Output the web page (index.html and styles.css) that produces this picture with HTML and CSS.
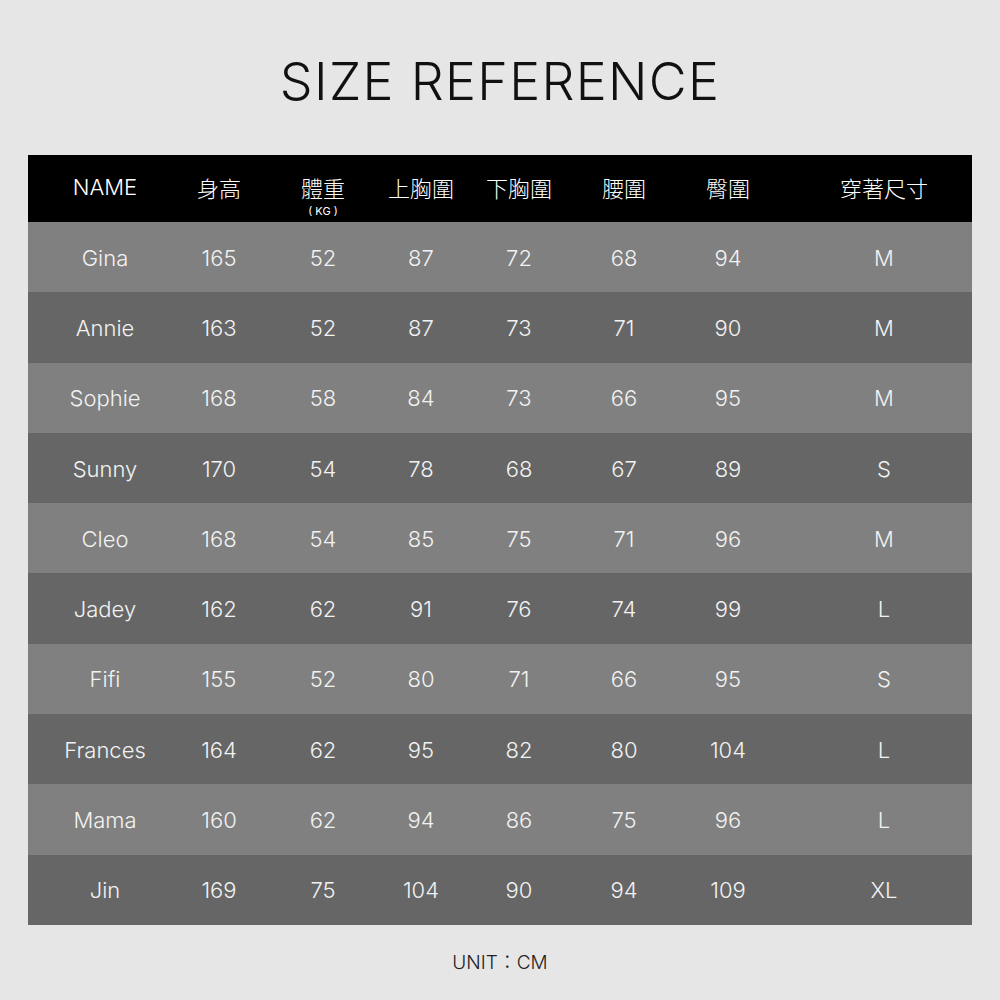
FILE: index.html
```html
<!DOCTYPE html>
<html lang="zh-Hant">
<head>
<meta charset="utf-8">
<title>Size Reference</title>
<link rel="stylesheet" href="styles.css">
</head>
<body>
<div class="page">
  <h1 class="title">SIZE REFERENCE</h1>
  <div class="table">
    <div class="row head">
      <div class="cell">NAME</div>
      <div class="cell">身高</div>
      <div class="cell">體重<span class="sub">( KG )</span></div>
      <div class="cell">上胸圍</div>
      <div class="cell">下胸圍</div>
      <div class="cell">腰圍</div>
      <div class="cell">臀圍</div>
      <div class="cell">穿著尺寸</div>
    </div>
    <div class="row light"><div class="cell">Gina</div><div class="cell">165</div><div class="cell">52</div><div class="cell">87</div><div class="cell">72</div><div class="cell">68</div><div class="cell">94</div><div class="cell">M</div></div>
    <div class="row dark"><div class="cell">Annie</div><div class="cell">163</div><div class="cell">52</div><div class="cell">87</div><div class="cell">73</div><div class="cell">71</div><div class="cell">90</div><div class="cell">M</div></div>
    <div class="row light"><div class="cell">Sophie</div><div class="cell">168</div><div class="cell">58</div><div class="cell">84</div><div class="cell">73</div><div class="cell">66</div><div class="cell">95</div><div class="cell">M</div></div>
    <div class="row dark"><div class="cell">Sunny</div><div class="cell">170</div><div class="cell">54</div><div class="cell">78</div><div class="cell">68</div><div class="cell">67</div><div class="cell">89</div><div class="cell">S</div></div>
    <div class="row light"><div class="cell">Cleo</div><div class="cell">168</div><div class="cell">54</div><div class="cell">85</div><div class="cell">75</div><div class="cell">71</div><div class="cell">96</div><div class="cell">M</div></div>
    <div class="row dark"><div class="cell">Jadey</div><div class="cell">162</div><div class="cell">62</div><div class="cell">91</div><div class="cell">76</div><div class="cell">74</div><div class="cell">99</div><div class="cell">L</div></div>
    <div class="row light"><div class="cell">Fifi</div><div class="cell">155</div><div class="cell">52</div><div class="cell">80</div><div class="cell">71</div><div class="cell">66</div><div class="cell">95</div><div class="cell">S</div></div>
    <div class="row dark"><div class="cell">Frances</div><div class="cell">164</div><div class="cell">62</div><div class="cell">95</div><div class="cell">82</div><div class="cell">80</div><div class="cell">104</div><div class="cell">L</div></div>
    <div class="row light"><div class="cell">Mama</div><div class="cell">160</div><div class="cell">62</div><div class="cell">94</div><div class="cell">86</div><div class="cell">75</div><div class="cell">96</div><div class="cell">L</div></div>
    <div class="row dark"><div class="cell">Jin</div><div class="cell">169</div><div class="cell">75</div><div class="cell">104</div><div class="cell">90</div><div class="cell">94</div><div class="cell">109</div><div class="cell">XL</div></div>
  </div>
  <p class="unit">UNIT：CM</p>
</div>
</body>
</html>
```
FILE: styles.css
```css
html, body {
  margin: 0;
  padding: 0;
  background: #e6e6e6;
}
body {
  font-family: "Inter", "Liberation Sans", "Noto Sans CJK TC", sans-serif;
  font-weight: 300;
}
.page {
  width: 1000px;
  height: 1000px;
  overflow: hidden;
}
.title {
  margin: 0;
  padding-top: 52px;
  height: 60px;
  line-height: 60px;
  margin-bottom: 43px;
  text-align: center;
  font-size: 52px;
  font-weight: 300;
  color: #111;
  letter-spacing: 1.3px;
}
.table {
  margin: 0 28px;
  width: 944px;
}
.row {
  display: grid;
  grid-template-columns: 154px 74px 134px 62px 134px 76px 132px 180px;
  height: 70.3px;
}
.row.head {
  height: 67px;
  background: #000;
}
.row.light { background: #808080; }
.row.dark { background: #666666; }
.cell {
  position: relative;
  display: flex;
  align-items: center;
  justify-content: center;
  color: #f2f2f2;
  font-size: 22px;
  white-space: nowrap;
  padding-top: 1px;
}
.head .cell {
  color: #fff;
  font-size: 22px;
  padding-top: 0;
  padding-bottom: 4px;
}
.sub {
  position: absolute;
  left: 0;
  right: 0;
  top: 49px;
  text-align: center;
  font-size: 11px;
  font-weight: 400;
  line-height: 14px;
}
.unit {
  margin: 23px 0 0;
  line-height: 30px;
  text-align: center;
  font-size: 19px;
  color: #222;
}
```
